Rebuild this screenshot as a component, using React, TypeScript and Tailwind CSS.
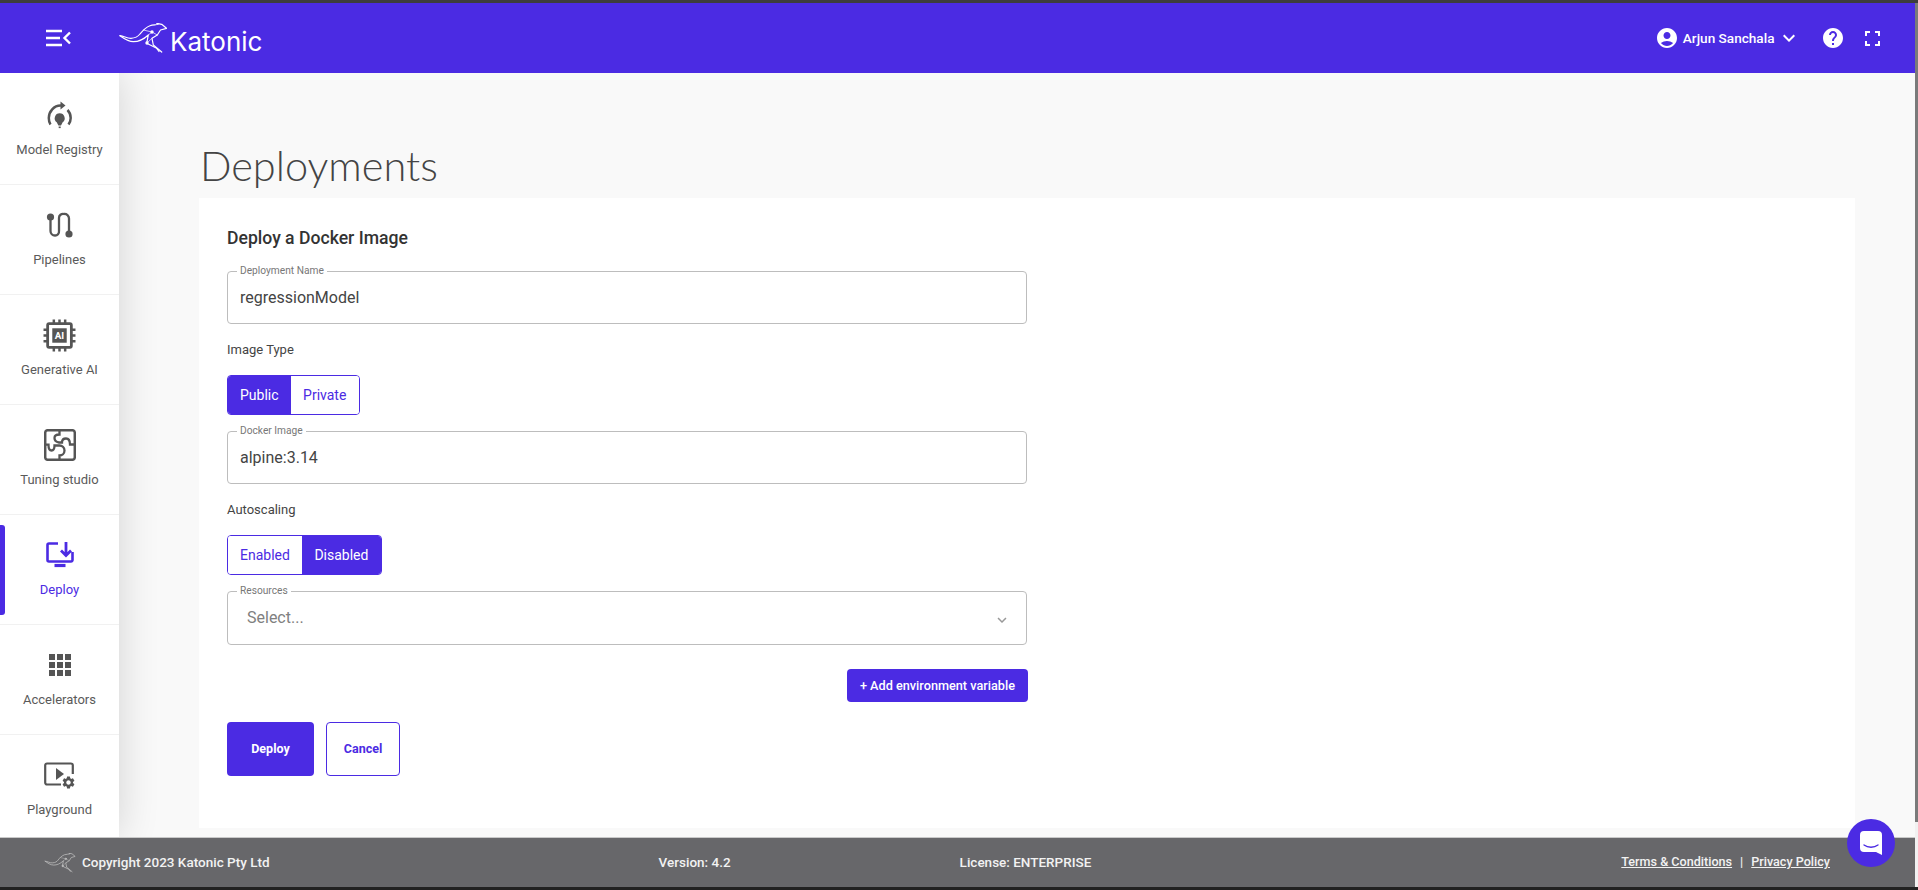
import React from 'react'
import { MdAccountCircle, MdHelp, MdKeyboardArrowDown } from 'react-icons/md'

const gearPath =
  'M19.14 12.94c.04-.3.06-.61.06-.94 0-.32-.02-.64-.07-.94l2.03-1.58a.49.49 0 0 0 .12-.61l-1.92-3.32a.488.488 0 0 0-.59-.22l-2.39.96c-.5-.38-1.03-.7-1.62-.94l-.36-2.54a.484.484 0 0 0-.48-.41h-3.84c-.24 0-.43.17-.47.41l-.36 2.54c-.59.24-1.13.57-1.62.94l-2.39-.96c-.22-.08-.47 0-.59.22L2.74 8.87c-.12.21-.08.47.12.61l2.03 1.58c-.05.3-.09.63-.09.94s.02.64.07.94l-2.03 1.58a.49.49 0 0 0-.12.61l1.92 3.32c.12.22.37.29.59.22l2.39-.96c.5.38 1.03.7 1.62.94l.36 2.54c.05.24.24.41.48.41h3.84c.24 0 .44-.17.47-.41l.36-2.54c.59-.24 1.13-.56 1.62-.94l2.39.96c.22.08.47 0 .59-.22l1.92-3.32c.12-.22.07-.47-.12-.61l-2.01-1.58zM12 15.6c-1.98 0-3.6-1.62-3.6-3.6s1.62-3.6 3.6-3.6 3.6 1.62 3.6 3.6-1.62 3.6-3.6 3.6z'

function Kangaroo({ className = '' }: { className?: string }) {
  return (
    <svg className={className} viewBox="0 0 48 31" fill="none" stroke="currentColor" strokeWidth="1.2" strokeLinecap="round" strokeLinejoin="round">
      <path d="M1 12.7C5 13 8 15.5 12 15.3C17 15 19 13.5 21 11C23 8.5 26 4.5 31 2.7C34 1.8 37 2 39.3 1.3L37.7 0.3L42.7 1.3L47.5 5.3L41.5 7L38.3 12L33 15.3L34.3 22L42.7 29" />
      <path d="M1 12.7C5 15.5 9 18.7 14.3 18.7C19 18.7 24 17 29.3 12L27.7 20.3L37.7 25.3L40 28.5" />
      <path d="M24.3 7L33 9L38.3 12M29.3 12L33 9M33 15.3L28 20" strokeWidth="0.7" />
      <circle cx="33" cy="9" r="1.1" fill="currentColor" />
      <circle cx="28" cy="20" r="1.1" fill="currentColor" />
    </svg>
  )
}

function ModelRegistryIcon() {
  return (
    <svg className="h-[28px] w-[28px] text-[#555]" viewBox="0 0 28 28" fill="none" stroke="currentColor">
      <path d="M4.5 23.5C3 21.5 2.8 19 2.8 17C2.8 10.5 8 4.5 14.5 4.5H17" strokeWidth="2.5" />
      <path d="M21.5 9C23.5 11 24.7 14 24.7 17C24.7 19.5 24 21.5 22.5 23.5" strokeWidth="2.5" />
      <path d="M14.5 0.5L19.5 4.5L14.5 8.5Z" fill="currentColor" stroke="none" />
      <path d="M13.7 12.3a5 5 0 0 1 3 9L15 24.5H12.4L10.7 21.3a5 5 0 0 1 3-9z" fill="currentColor" stroke="none" />
      <rect x="12.7" y="25.5" width="2" height="1.6" fill="currentColor" stroke="none" />
    </svg>
  )
}

function PipelinesIcon() {
  return (
    <svg className="h-[28px] w-[28px] text-[#555]" viewBox="0 0 28 28" fill="none" stroke="currentColor">
      <circle cx="4.5" cy="6" r="3.6" fill="currentColor" stroke="none" />
      <circle cx="23" cy="23" r="3.6" fill="currentColor" stroke="none" />
      <path d="M4.5 6V20a4.5 4.5 0 0 0 4.5 4.5a4 4 0 0 0 4-4.5V7a4 4 0 0 1 5-4a4.5 4.5 0 0 1 5 4.5V23" strokeWidth="2.3" />
    </svg>
  )
}

function GenerativeIcon() {
  return (
    <svg className="h-[33px] w-[33px] text-[#555]" viewBox="0 0 32 32" fill="none" stroke="currentColor">
      <rect x="4.5" y="4.5" width="23" height="23" rx="1.5" strokeWidth="2.7" />
      <rect x="9" y="9" width="14" height="14" fill="currentColor" stroke="none" />
      <path d="M10.5 0.5V4M16 0.5V4M21.5 0.5V4M10.5 28V31.5M16 28V31.5M21.5 28V31.5M0.5 10.5H4M0.5 16H4M0.5 21.5H4M28 10.5H31.5M28 16H31.5M28 21.5H31.5" strokeWidth="2.4" />
      <text x="16" y="19.5" textAnchor="middle" fill="#fff" stroke="none" fontSize="9.5" fontWeight="700" fontFamily="Roboto, sans-serif">AI</text>
    </svg>
  )
}

function TuningIcon() {
  return (
    <svg className="h-[32px] w-[32px] text-[#555]" viewBox="0 0 32 32" fill="none" stroke="currentColor" strokeWidth="2.3">
      <rect x="1.2" y="1.2" width="29.6" height="29.6" rx="2.5" strokeWidth="2.5" />
      <path d="M15.5 1V5.5C12 5.5 10.5 7 10.5 9C10.5 11.5 12.5 13 15 13.5H18C18 10.5 20 9.5 22 9.5C24.5 9.5 26 11.5 26 15.5H31" />
      <path d="M1 15.7H4.5C4.5 19 5.5 21.5 7.5 21.5C9.5 21.5 10.5 19 10.5 16.5H15.5C18 16.5 20.5 18.5 20.5 21.5C20.5 24.5 18 26.5 15.5 26.5V31" />
    </svg>
  )
}

function DeployIcon() {
  return (
    <svg className="h-[28px] w-[28px] text-[#4b2be3]" viewBox="0 0 28 28" fill="none" stroke="currentColor">
      <path d="M12 2.5H3A1.5 1.5 0 0 0 1.5 4V19A1.5 1.5 0 0 0 3 20.5H25A1.5 1.5 0 0 0 26.5 19V11" strokeWidth="2.6" />
      <path d="M8.5 24.5H19.5" strokeWidth="3.2" />
      <path d="M20 1V14M15 9.5L20 14.5L25 9.5" strokeWidth="2.8" />
    </svg>
  )
}

function AcceleratorsIcon() {
  return (
    <div className="grid grid-cols-3 gap-[2px]">
      {Array.from({ length: 9 }).map((_, i) => (
        <div key={i} className="h-[6px] w-[6px] bg-[#555]" />
      ))}
    </div>
  )
}

function PlaygroundIcon() {
  return (
    <svg className="mt-[5px] h-[32px] w-[32px] text-[#555]" viewBox="0 0 32 32" fill="none">
      <path d="M17 22.5H3A1.8 1.8 0 0 1 1.2 20.7V3.3A1.8 1.8 0 0 1 3 1.5H27A1.8 1.8 0 0 1 28.8 3.3V12" stroke="currentColor" strokeWidth="2.2" />
      <path d="M12 6L20 12L12 18Z" fill="currentColor" />
      <svg x="17" y="13" width="15" height="15" viewBox="0 0 24 24">
        <path d={gearPath} fill="currentColor" />
      </svg>
    </svg>
  )
}

function MenuIcon() {
  return (
    <svg className="h-[18px] w-[25px] text-white" viewBox="0 0 25 18" fill="none" stroke="currentColor" strokeWidth="2.4">
      <path d="M0 2H16M0 9H14M0 16H16" />
      <path d="M24 3.5L18.5 9L24 14.5" />
    </svg>
  )
}

function FullscreenIcon() {
  return (
    <svg className="h-[15px] w-[15px] text-white" viewBox="0 0 15 15" fill="none" stroke="currentColor" strokeWidth="2">
      <path d="M1 5V1H5M10 1H14V5M14 10V14H10M5 14H1V10" />
    </svg>
  )
}

const navItems = [
  { label: 'Model Registry', icon: <ModelRegistryIcon /> },
  { label: 'Pipelines', icon: <PipelinesIcon /> },
  { label: 'Generative AI', icon: <GenerativeIcon /> },
  { label: 'Tuning studio', icon: <TuningIcon /> },
  { label: 'Deploy', icon: <DeployIcon />, active: true },
  { label: 'Accelerators', icon: <AcceleratorsIcon /> },
  { label: 'Playground', icon: <PlaygroundIcon /> },
]

function SideItem({ label, icon, active }: { label: string; icon: React.ReactNode; active?: boolean }) {
  return (
    <div className="relative flex h-[110px] flex-col items-center border-b border-[#f1f1f1] last:border-b-0">
      {active && <div className="absolute left-0 top-[10px] h-[90px] w-[5px] rounded-r-[3px] bg-[#4b2be3]" />}
      <div className="mt-[24px] flex h-[32px] items-center justify-center">{icon}</div>
      <span className={`mt-[10px] text-[13px] leading-[18px] ${active ? 'text-[#4b2be3]' : 'text-[#5a5a5a]'}`}>{label}</span>
    </div>
  )
}

function OutlinedField({ label, value, className = '' }: { label: string; value: string; className?: string }) {
  return (
    <fieldset className={`h-[58px] w-[800px] rounded-[4px] border border-[#bdbdbd] pl-[12px] ${className}`}>
      <legend className="ml-[-3px] px-[3px] text-[10.2px] leading-[10px] text-[#777]">{label}</legend>
      <div className="mt-[10px] text-[16px] leading-[24px] text-[#444]">{value}</div>
    </fieldset>
  )
}

function Segmented({ left, right, active }: { left: string; right: string; active: 'left' | 'right' }) {
  const on = 'bg-[#4b2be3] text-white'
  const off = 'bg-white text-[#4b2be3]'
  return (
    <div className="flex h-[40px] w-fit overflow-hidden rounded-[4px] border border-[#4b2be3] text-[14px]">
      <div className={`flex items-center pl-[12px] pr-[12.5px] ${active === 'left' ? on : off}`}>{left}</div>
      <div className={`flex items-center pl-[12px] pr-[12.5px] ${active === 'right' ? on : off}`}>{right}</div>
    </div>
  )
}

export default function App() {
  return (
    <div className="relative flex h-[890px] w-full flex-col overflow-hidden bg-[#f9f9f9] font-['Roboto',sans-serif]">
      <div className="h-[3px] shrink-0 bg-[#3d3d3d]" />
      <div className="flex min-h-0 flex-1">
        <div className="flex min-w-0 flex-1 flex-col">
          {/* Header */}
          <header className="z-20 flex h-[70px] shrink-0 items-center bg-[#4b2be3] pl-[46px] pr-[35px] text-white">
            <MenuIcon />
            <Kangaroo className="ml-[48px] h-[31px] w-[48px]" />
            <span className="ml-[3px] mt-[8px] font-['Inter',sans-serif] text-[26px] font-normal leading-none">Katonic</span>
            <div className="ml-auto flex items-center">
              <MdAccountCircle className="h-[24px] w-[24px]" />
              <span className="ml-[4px] text-[13.6px] font-medium">Arjun Sanchala</span>
              <MdKeyboardArrowDown className="ml-[2px] h-[24px] w-[24px]" />
              <MdHelp className="ml-[20.5px] h-[24px] w-[24px]" />
              <div className="ml-[20px]">
                <FullscreenIcon />
              </div>
            </div>
          </header>

          <div className="flex min-h-0 flex-1">
            {/* Sidebar */}
            <aside className="z-10 w-[119px] shrink-0 bg-white pt-[2px] shadow-[0_0_40px_rgba(0,0,0,0.16)]">
              {navItems.map((item) => (
                <SideItem key={item.label} {...item} />
              ))}
            </aside>

            {/* Content */}
            <main className="min-w-0 flex-1 pl-[80px] pr-[60px]">
              <h1 className="mb-[5px] mt-[64px] pl-[1px] font-['Lato',sans-serif] text-[41.5px] font-light leading-[56px] text-[#444]">Deployments</h1>
              <section className="h-[630px] bg-white pl-[28px] pt-[29px]">
                <h2 className="text-[17.6px] font-medium leading-[22px] text-[#333]">Deploy a Docker Image</h2>
                <OutlinedField className="mt-[17px]" label="Deployment Name" value="regressionModel" />
                <div className="mt-[16px] text-[13px] leading-[20px] text-[#444]">Image Type</div>
                <div className="mt-[15px]">
                  <Segmented left="Public" right="Private" active="left" />
                </div>
                <OutlinedField className="mt-[11px]" label="Docker Image" value="alpine:3.14" />
                <div className="mt-[16px] text-[13px] leading-[20px] text-[#444]">Autoscaling</div>
                <div className="mt-[15px]">
                  <Segmented left="Enabled" right="Disabled" active="right" />
                </div>
                <fieldset className="mt-[11px] h-[59px] w-[800px] rounded-[4px] border border-[#bdbdbd] pl-[19px] pr-[15px]">
                  <legend className="ml-[-10px] px-[3px] text-[10.2px] leading-[10px] text-[#777]">Resources</legend>
                  <div className="mt-[10px] flex items-center justify-between text-[16px] leading-[24px] text-[#808080]">
                    <span>Select...</span>
                    <MdKeyboardArrowDown className="mt-[3px] h-[18px] w-[18px] text-[#999]" />
                  </div>
                </fieldset>
                <div className="mt-[24px] flex w-[801px] justify-end">
                  <button className="h-[33px] rounded-[4px] bg-[#4b2be3] px-[13px] text-[12.7px] font-medium text-white">+ Add environment variable</button>
                </div>
                <div className="mt-[20px] flex gap-[12px]">
                  <button className="h-[54px] w-[87px] rounded-[4px] bg-[#4b2be3] text-[12.5px] font-bold text-white">Deploy</button>
                  <button className="h-[54px] w-[74px] rounded-[4px] border border-[#4b2be3] bg-white text-[12.5px] font-bold text-[#4b2be3]">Cancel</button>
                </div>
              </section>
            </main>
          </div>

          {/* Footer */}
          <footer className="z-20 flex h-[50px] shrink-0 items-center border-t border-[#c9c9c9] bg-[#67676a] pl-[44px] pr-[85px] text-[12.6px] font-medium text-[#f2f2f2]">
            <Kangaroo className="h-[20px] w-[32px] text-[#bdbdbd]" />
            <span className="ml-[6px] text-[13.5px]">Copyright 2023 Katonic Pty Ltd</span>
            <span className="ml-[389px] text-[13.5px]">Version: 4.2</span>
            <span className="ml-[229px] text-[13.5px]">License: ENTERPRISE</span>
            <div className="ml-auto flex items-center">
              <span className="underline">Terms &amp; Conditions</span>
              <span className="mx-[8px]">|</span>
              <span className="underline">Privacy Policy</span>
            </div>
          </footer>
        </div>

        {/* Scrollbar */}
        <div className="z-30 flex w-[3px] shrink-0 flex-col bg-[#f1f1f1]">
          <div className="h-[819px] bg-[#7a7a7a]" />
        </div>
      </div>
      <div className="z-20 h-[3px] shrink-0 bg-[#222]" />

      {/* Chat bubble */}
      <div className="absolute left-[1847px] top-[819px] z-40 flex h-[48px] w-[48px] items-center justify-center rounded-full bg-[#4b2be3]">
        <svg className="h-[24px] w-[22px]" viewBox="0 0 22 24">
          <path d="M4 0H18A4 4 0 0 1 22 4V24L16 21H4A4 4 0 0 1 0 17V4A4 4 0 0 1 4 0Z" fill="#fff" />
          <path d="M4 14C8 17 14 17 18 14" fill="none" stroke="#4b2be3" strokeWidth="1.3" strokeLinecap="round" />
        </svg>
      </div>
    </div>
  )
}
